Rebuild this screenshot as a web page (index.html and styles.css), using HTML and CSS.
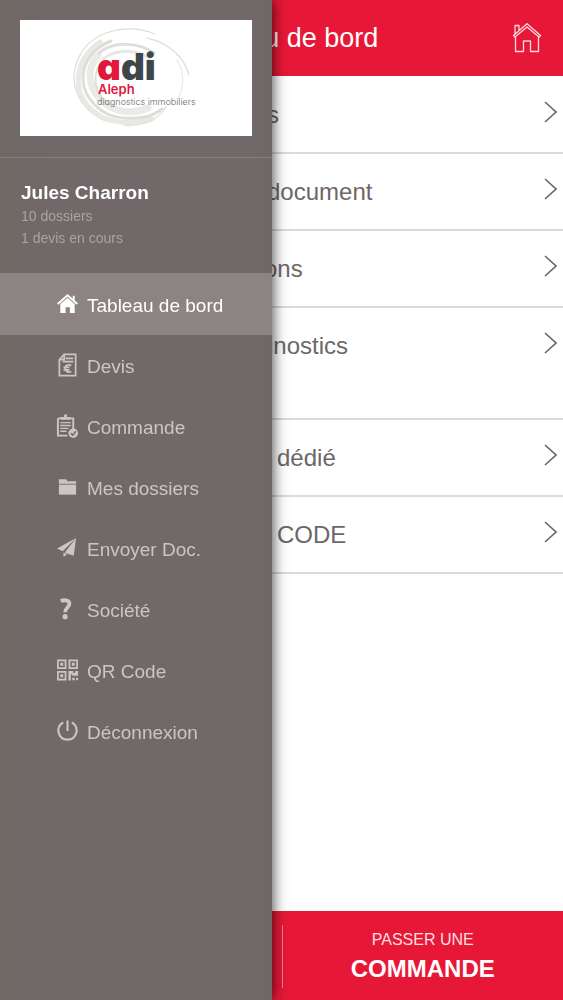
FILE: index.html
```html
<!DOCTYPE html>
<html lang="fr">
<head>
<meta charset="utf-8">
<meta name="viewport" content="width=device-width, initial-scale=1">
<title>Tableau de bord</title>
<link rel="stylesheet" href="styles.css">
</head>
<body>
<div class="app">
  <header class="topbar">
    <h1 class="topbar-title">Tableau de bord</h1>
    <button class="home-button" type="button" aria-label="Accueil">
      <svg width="30" height="30" viewBox="0 0 30 30" fill="none" stroke="currentColor" stroke-width="1.3" stroke-linejoin="round"><path d="M1.500 12.500 15 .8 28.500 12.500 27 14 15 4 3 14ZM3 11V2.500H7V7M3.500 14V28.500H11.500V18H18.500V28.500H26.500V14"/></svg>
    </button>
  </header>
  <main class="list">
    <a class="row" href="#"><span class="label from-268">s</span><svg class="chevron" viewBox="0 0 13 22"><path d="M1 1 12 11 1 21"/></svg></a>
    <a class="row" href="#"><span class="label from-268">document</span><svg class="chevron" viewBox="0 0 13 22"><path d="M1 1 12 11 1 21"/></svg></a>
    <a class="row" href="#"><span class="label from-264">ons</span><svg class="chevron" viewBox="0 0 13 22"><path d="M1 1 12 11 1 21"/></svg></a>
    <a class="row tall" href="#"><span class="label from-260">gnostics</span><svg class="chevron" viewBox="0 0 13 22"><path d="M1 1 12 11 1 21"/></svg></a>
    <a class="row" href="#"><span class="label from-277">dédié</span><svg class="chevron" viewBox="0 0 13 22"><path d="M1 1 12 11 1 21"/></svg></a>
    <a class="row" href="#"><span class="label from-277">CODE</span><svg class="chevron" viewBox="0 0 13 22"><path d="M1 1 12 11 1 21"/></svg></a>
  </main>
  <footer class="actions">
    <button class="order" type="button"><span class="order-small">PASSER UNE</span><span class="order-big">COMMANDE</span></button>
  </footer>
</div>

<aside class="drawer">
  <div class="brand">
    <svg class="logo" viewBox="0 0 232 116" role="img" aria-label="adi Aleph diagnostics immobiliers">
      <g fill="none" stroke-linecap="round">
        <path d="M135 14C108 3 72 10 59 37S60 91 88 102" stroke="#dcdcd8" stroke-width="1.200"/>
        <path d="M80 22C57 37 52 66 67 85S108 105 132 99" stroke="#e9e8e4" stroke-width="5"/>
        <path d="M91 21C73 28 62 43 63 60S80 97 104 98S133 95 142 89" stroke="#deddd8" stroke-width="3"/>
        <path d="M78 36C66 48 68 66 80 79S112 95 128 88" stroke="#ebeae6" stroke-width="7"/>
        <path d="M79 33C93 21 119 22 134 33" stroke="#dfded9" stroke-width="3"/>
        <path d="M83 39C97 28 120 29 130 40" stroke="#e8e7e4" stroke-width="3"/>
        <path d="M81 43C71 56 75 76 90 85" stroke="#dfded9" stroke-width="2"/>
        <path d="M127 18C149 23 164 37 169 55" stroke="#e2e2e0" stroke-width="1.500"/>
        <path d="M157 40C165 53 164 68 158 78" stroke="#ededeb" stroke-width="1.500"/>
        <path d="M146 87C138 101 119 107 104 105" stroke="#e2e1dd" stroke-width="1.500"/>
      </g>
      <text class="logo-adi" x="77" y="60"><tspan class="logo-red">a</tspan>di</text>
      <text class="logo-name" x="78" y="74">Aleph</text>
      <text class="logo-tag" x="77" y="85">diagnostics immobiliers</text>
    </svg>
  </div>
  <section class="user">
    <h2 class="user-name">Jules Charron</h2>
    <p class="user-info">10 dossiers</p>
    <p class="user-info">1 devis en cours</p>
  </section>
  <nav class="menu">
    <a class="item active" href="#"><svg class="icon" viewBox="0 0 24 24"><path d="M12 5.500 19.500 12V21.500H14.500V15.500H10V21.500H4.500V12Z"/><path d="M1.800 12 12 2.800 22.200 12M18.500 3.500V8" fill="none" stroke="currentColor" stroke-width="2"/></svg>Tableau de bord</a>
    <a class="item" href="#"><svg class="icon" viewBox="0 0 24 24"><path d="M8.500 1H20.500V23H3.500V6.500ZM8.500 1V6.500H3.500M10 5H18M7 8.500H18" fill="none" stroke="currentColor" stroke-width="1.800"/><path d="M16 12.500C12 10.500 9.500 13 9.500 15.500S12 20.500 16 18.800M7.800 14.500H14M7.800 17H14" fill="none" stroke="currentColor" stroke-width="1.800"/></svg>Devis</a>
    <a class="item" href="#"><svg class="icon" viewBox="0 0 24 24"><path d="M2 4H18V15M12 22H2V4" fill="none" stroke="currentColor" stroke-width="2"/><path d="M5 5.500V2.500H8.500V0H11.500V2.500H15V5.500Z"/><path d="M4.500 8.500H15.500M4.500 11.500H15.500M4.500 14.500H13M4.500 17.500H11" stroke="currentColor" stroke-width="1.500"/><circle cx="18" cy="19.500" r="5"/><path d="M15.500 19.500 17.500 21.500 20.800 17.500" fill="none" stroke="#716869" stroke-width="1.500"/></svg>Commande</a>
    <a class="item" href="#"><svg class="icon" viewBox="0 0 24 24"><path d="M3 4H10.500L12 6H21V8.500H3Z"/><path d="M3 9.500H21V20H3Z"/></svg>Mes dossiers</a>
    <a class="item" href="#"><svg class="icon" viewBox="0 0 24 24"><path d="M21 1.500 1 12.500 7 15.500ZM21 1.500 9 17 18.500 20ZM7.500 17 11.500 18.500 8 21.500Z"/></svg>Envoyer Doc.</a>
    <a class="item" href="#"><svg class="icon" viewBox="0 0 24 24"><path d="M5 3.800C8 2.200 14 2.400 14 6.500C14 10.500 9.500 10.500 9.500 15.500" fill="none" stroke="currentColor" stroke-width="4"/><circle cx="9.500" cy="20" r="2.700"/></svg>Société</a>
    <a class="item" href="#"><svg class="icon" viewBox="0 0 24 24"><path d="M2 2H10V10H2ZM14 2H22V10H14ZM2 14H10V22H2Z" fill="none" stroke="currentColor" stroke-width="1.800"/><path d="M4.500 4.500H7.500V7.500H4.500ZM16.500 4.500H19.500V7.500H16.500ZM4.500 16.500H7.500V19.500H4.500ZM13 13H18V15H20V13H23V18H17V16.500H15.500V23H13ZM17 20H19.500V22.800H17ZM21 20H23V22.800H21Z"/></svg>QR Code</a>
    <a class="item" href="#"><svg class="icon" viewBox="0 0 24 24"><path d="M7.500 3C-1 8 2 21 12 21S25 8 16.500 3M12 1V12" fill="none" stroke="currentColor" stroke-width="2.200"/></svg>Déconnexion</a>
  </nav>
</aside>
</body>
</html>
```

FILE: styles.css
```css
* { box-sizing: border-box; }

body {
  margin: 0;
  background: #fff;
  color: #6c6767;
  font-family: "Liberation Sans", Arial, sans-serif;
}

h1, h2, p { margin: 0; }
a { color: inherit; text-decoration: none; }
button { border: 0; padding: 0; background: none; color: inherit; font: inherit; }
svg { display: block; flex: none; }

.app {
  display: flex;
  flex-direction: column;
  min-height: 100vh;
}

.topbar {
  display: grid;
  grid-template-columns: 30px 1fr 30px;
  align-items: center;
  height: 76px;
  padding: 0 21px;
  background: #e71837;
  color: #fff;
}

.topbar-title {
  grid-column: 2;
  font-size: 27px;
  font-weight: 400;
  line-height: 32px;
  text-align: center;
}

.home-button { color: #ffd9dc; }

.list { flex: 1; padding-top: 1px; }

.row {
  display: flex;
  align-items: flex-start;
  justify-content: space-between;
  min-height: 77px;
  padding: 24px 6px 0 0;
  border-bottom: 2px solid #dadada;
}

.tall { min-height: 112px; }

.label { font-size: 24px; line-height: 28px; }
.from-260 { padding-left: 260px; }
.from-264 { padding-left: 264px; }
.from-268 { padding-left: 267px; }
.from-277 { padding-left: 277px; }

.chevron {
  width: 13px;
  height: 22px;
  fill: none;
  stroke: #666;
  stroke-width: 1.6;
}

.actions {
  display: grid;
  grid-template-columns: 1fr 1fr;
  padding: 14px 0 12px;
  background: #e71837;
}

.order {
  grid-column: 2;
  display: flex;
  flex-direction: column;
  align-items: center;
  padding: 3px 0;
  border-left: 1px solid #f0808c;
  color: #fff;
}

.order-small { font-size: 16px; line-height: 24px; color: #ffdfe0; }
.order-big { padding-top: 1px; font-size: 24px; font-weight: 700; line-height: 32px; }

.drawer {
  position: fixed;
  top: 0;
  bottom: 0;
  left: 0;
  width: 272px;
  background: linear-gradient(90deg, #6f6965, #716869 20%, #716869 95%, #6d6766);
  box-shadow: 0 0 14px rgba(0, 0, 0, 0.8);
}

.brand {
  padding: 20px 20px 21px;
  border-bottom: 1px solid #857c7d;
}

.logo { width: 100%; background: #fff; }

.logo-adi {
  font-family: Inter, sans-serif;
  font-feature-settings: "cv11";
  font-size: 37px;
  font-weight: 900;
  fill: #3f464b;
}

.logo-red { fill: #e3173a; }

.logo-name {
  font-family: Inter, sans-serif;
  font-size: 13px;
  font-weight: 600;
  fill: #e3173a;
}

.logo-tag {
  font-family: Inter, sans-serif;
  font-feature-settings: "cv11";
  font-size: 9px;
  font-weight: 300;
  fill: #66686a;
}

.user { padding: 23px 21px 24px; }

.user-name {
  color: #fff;
  font-size: 19px;
  line-height: 24px;
}

.user-info {
  color: #aaa3a3;
  font-size: 14px;
  line-height: 22px;
}

.item {
  display: flex;
  align-items: center;
  gap: 8px;
  height: 61px;
  padding: 3px 0 0 56px;
  color: #cbc5c5;
  font-size: 19px;
}

.active {
  height: 62px;
  background: #8b8483;
  color: #fff;
}

.icon {
  width: 23px;
  height: 24px;
  margin-bottom: 4px;
  fill: currentColor;
}
```
